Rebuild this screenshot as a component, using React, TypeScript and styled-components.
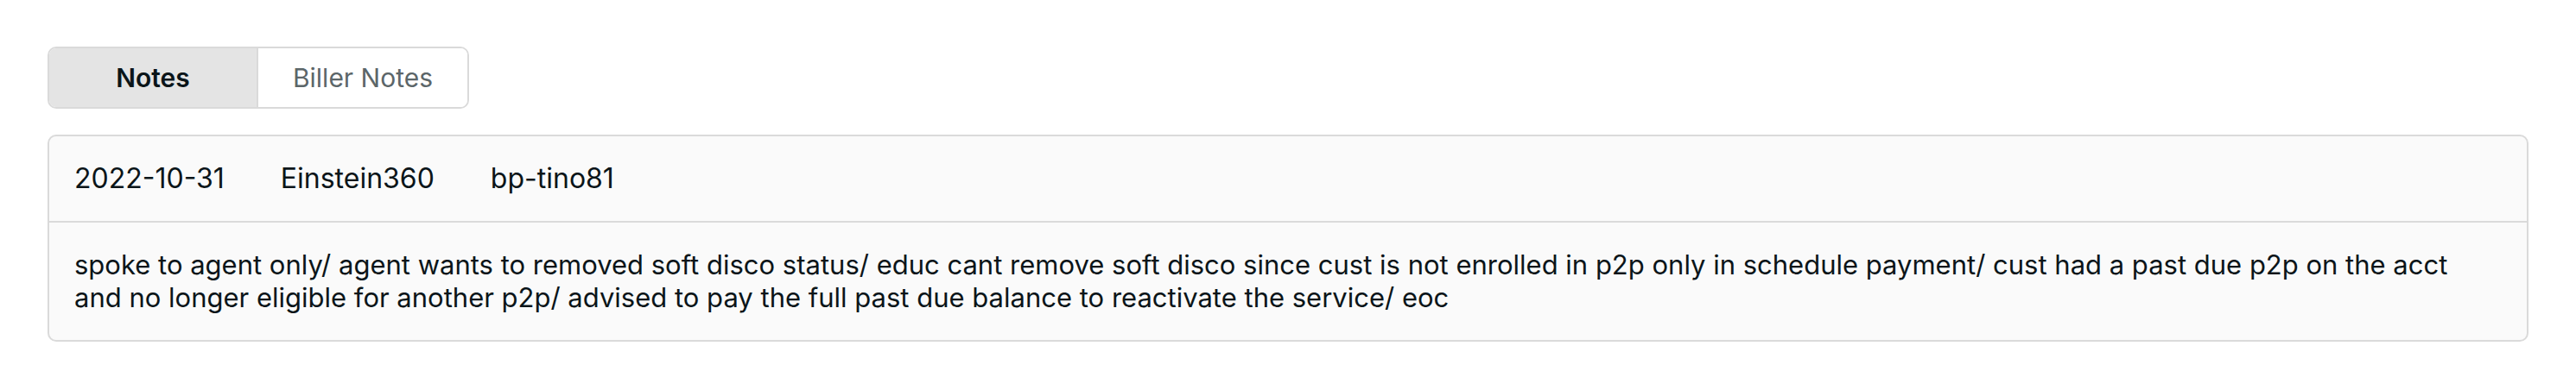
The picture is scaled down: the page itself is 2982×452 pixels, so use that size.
import React, { useState } from "react";
import styled, { createGlobalStyle } from "styled-components";

const GlobalStyle = createGlobalStyle`
  html, body {
    margin: 0;
    padding: 0;
    background: #ffffff;
  }
  body {
    font-family: Inter, "Noto Sans", "Liberation Sans", sans-serif;
    color: #0b1519;
  }
`;

const Page = styled.div`
  padding: 54px 55px 0 55px;
  display: flex;
  flex-direction: column;
  gap: 30px;
`;

const TabGroup = styled.div`
  display: flex;
  align-self: flex-start;
  border: 2px solid #dadada;
  border-radius: 10px;
  overflow: hidden;
`;

const Tab = styled.button<{ active: boolean }>`
  width: 242px;
  padding: 15px 0;
  border: none;
  border-right: 2px solid #dadada;
  background: ${(p) => (p.active ? "#e4e4e4" : "#ffffff")};
  color: ${(p) => (p.active ? "#0b1519" : "#5c6669")};
  font-family: inherit;
  font-size: 30px;
  line-height: 38px;
  font-weight: ${(p) => (p.active ? 600 : 400)};
  cursor: pointer;

  &:last-child {
    border-right: none;
  }
`;

const NoteCard = styled.div`
  border: 2px solid #dadada;
  border-radius: 10px;
  background: #fafafa;
`;

const NoteHeader = styled.div`
  display: flex;
  gap: 65px;
  padding: 30px 29px;
  font-size: 32px;
  line-height: 38px;
  border-bottom: 2px solid #dadada;
`;

const NoteBody = styled.div`
  padding: 30px 29px;
  font-size: 31px;
  line-height: 38px;
`;

type Note = { date: string; source: string; user: string; text: string };

const notes: Note[] = [
  {
    date: "2022-10-31",
    source: "Einstein360",
    user: "bp-tino81",
    text: "spoke to agent only/ agent wants to removed soft disco status/ educ cant remove soft disco since cust is not enrolled in p2p only in schedule payment/ cust had a past due p2p on the acct and no longer eligible for another p2p/ advised to pay the full past due balance to reactivate the service/ eoc",
  },
];

const App = () => {
  const [tab, setTab] = useState("notes");

  return (
    <>
      <GlobalStyle />
      <Page>
        <TabGroup>
          <Tab active={tab === "notes"} onClick={() => setTab("notes")}>
            Notes
          </Tab>
          <Tab active={tab === "biller"} onClick={() => setTab("biller")}>
            Biller Notes
          </Tab>
        </TabGroup>
        {notes.map((n, i) => (
          <NoteCard key={i}>
            <NoteHeader>
              <span>{n.date}</span>
              <span>{n.source}</span>
              <span>{n.user}</span>
            </NoteHeader>
            <NoteBody>{n.text}</NoteBody>
          </NoteCard>
        ))}
      </Page>
    </>
  );
};

export default App;
